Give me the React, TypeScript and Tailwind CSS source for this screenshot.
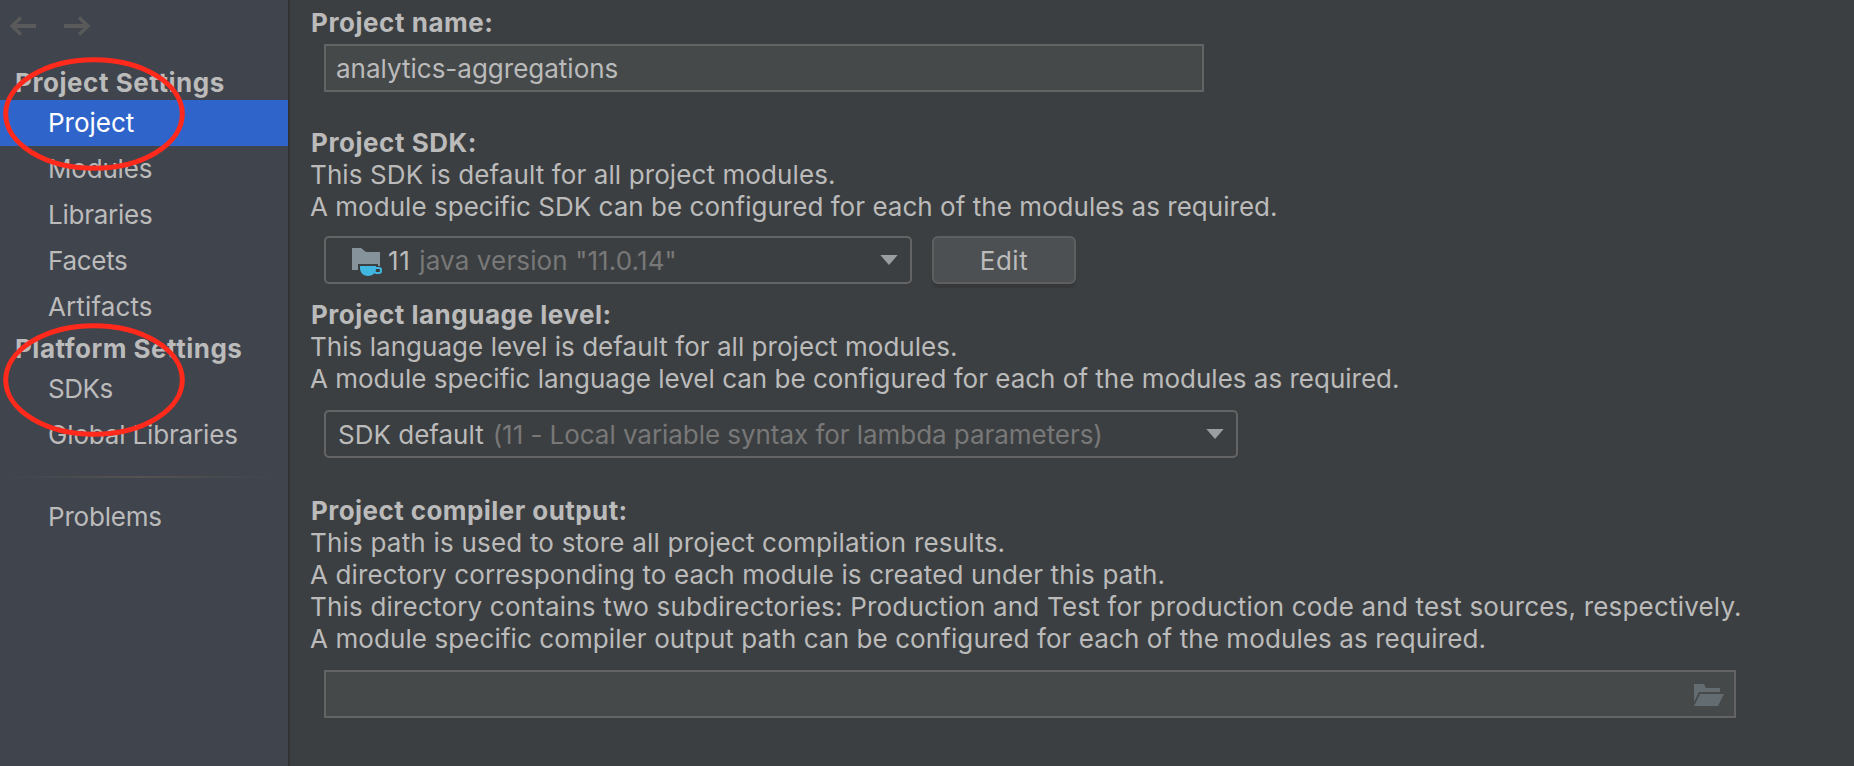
import React from 'react';
import type { ReactNode } from 'react';

function NavHeader({ children, className }: { children: ReactNode; className: string }) {
  return <div className={`flex h-9 items-center pt-0.5 pl-[15px] font-bold whitespace-nowrap ${className}`}>{children}</div>;
}

function NavItem({ label, active = false, className = '' }: { label: string; active?: boolean; className?: string }) {
  return (
    <div className={`flex h-[46px] items-center pl-12 whitespace-nowrap ${active ? 'bg-[#2f65ca] text-white' : ''} ${className}`}>
      {label}
    </div>
  );
}

function SectionTitle({ children, className }: { children: ReactNode; className: string }) {
  return <h2 className={`pl-px font-bold ${className}`}>{children}</h2>;
}

function Caret() {
  return (
    <svg className="-mt-0.5 ml-auto" width="18" height="10" viewBox="0 0 18 10">
      <path d="M0.3 0H17.7L9 10Z" fill="#9b9ea1" />
    </svg>
  );
}

function JdkIcon() {
  return (
    <svg width="30" height="28" viewBox="0 0 30 28">
      <path d="M0 0H9L14 4H28V18H26V16H6V22H0Z" fill="#87939a" />
      <path d="M8 18H24V20C24 25 20.5 28 16 28C11.500 28 8 25 8 20Z" fill="#40b6e0" />
      <rect x="22.500" y="20" width="6.500" height="5" rx="2" fill="none" stroke="#40b6e0" strokeWidth="2" />
    </svg>
  );
}

function OpenFolderIcon() {
  return (
    <svg width="30" height="22" viewBox="0 0 30 22" fill="#636c70">
      <path d="M0 0H10L12 4H26V8H5L0 18Z" />
      <path d="M6 10H30L24 22H0Z" />
    </svg>
  );
}

function Ring({ className }: { className: string }) {
  return (
    <svg className={`pointer-events-none absolute left-[3px] ${className}`} width="182" height="114" viewBox="0 0 182 114">
      <ellipse cx="91" cy="57" rx="88.300" ry="54.300" fill="none" stroke="#ff2a1c" strokeWidth="5" />
    </svg>
  );
}

export default function App() {
  return (
    <div className="relative flex h-[766px] w-[1854px] overflow-hidden bg-[#3c3f41] font-['Inter',sans-serif] text-[26px] leading-8 text-[#bbbbbb]">
      <aside className="w-[290px] shrink-0 border-r-2 border-[#323232] bg-[#40444d]">
        <div className="flex h-16 items-start gap-7 pt-4 pl-2.5">
          <svg width="26" height="20" viewBox="0 0 26 20" fill="none" stroke="#5a5a5a">
            <path d="M3 10H26" strokeWidth="4" />
            <path d="M11 1.500L2 10L11 18.500" strokeWidth="3.300" />
          </svg>
          <svg width="26" height="20" viewBox="0 0 26 20" fill="none" stroke="#5a5a5a">
            <path d="M0 10H23" strokeWidth="4" />
            <path d="M15 1.500L24 10L15 18.500" strokeWidth="3.300" />
          </svg>
        </div>
        <NavHeader className="tracking-[0.55px]">Project Settings</NavHeader>
        <NavItem label="Project" active />
        <NavItem label="Modules" className="tracking-[-0.2px]" />
        <NavItem label="Libraries" className="tracking-[-0.25px]" />
        <NavItem label="Facets" className="tracking-[-0.3px]" />
        <NavItem label="Artifacts" className="tracking-[0.12px]" />
        <NavHeader className="tracking-[0.5px]">Platform Settings</NavHeader>
        <NavItem label="SDKs" className="tracking-[-0.5px]" />
        <NavItem label="Global Libraries" className="tracking-[-0.16px]" />
        <div className="mt-[18px] ml-2 h-0.5 w-[264px] bg-linear-to-r from-transparent via-[#555351] to-transparent" />
        <NavItem label="Problems" className="mt-4 tracking-[-0.2px]" />
      </aside>

      <main className="flex flex-1 flex-col items-start pt-[7px] pl-5 whitespace-nowrap">
        <SectionTitle className="tracking-[0.55px]">Project name:</SectionTitle>
        <div className="mt-[5px] ml-3.5 flex h-12 w-[880px] items-center border-2 border-[#646464] bg-[#45494a] pt-0.5 pl-2.5">
          analytics-aggregations
        </div>

        <SectionTitle className="mt-[35px] tracking-[0.55px]">Project SDK:</SectionTitle>
        <p className="tracking-[0.1px]">This SDK is default for all project modules.</p>
        <p className="tracking-[0.03px]">A module specific SDK can be configured for each of the modules as required.</p>
        <div className="mt-[13px] ml-3.5 flex gap-5">
          <div className="flex h-12 w-[588px] items-center rounded-[5px] border-2 border-[#646464] pt-0.5 pr-3 pl-[26px]">
            <span className="mt-0.5 mr-1.5"><JdkIcon /></span>
            <span className="tracking-[0.6px]">11</span>
            <span className="ml-[9px] tracking-[0.12px] text-[#787878]">java version "11.0.14"</span>
            <Caret />
          </div>
          <button className="h-12 w-36 rounded-md border-2 border-[#5e6060] bg-[#4c5052] pt-0.5 tracking-[0.5px] shadow-[0_4px_1px_#36383a]">Edit</button>
        </div>

        <SectionTitle className="mt-[15px] tracking-[0.52px]">Project language level:</SectionTitle>
        <p className="tracking-[0.04px]">This language level is default for all project modules.</p>
        <p>A module specific language level can be configured for each of the modules as required.</p>
        <div className="mt-[15px] ml-3.5 flex h-12 w-[914px] items-center rounded-[5px] border-2 border-[#646464] pt-0.5 pr-3 pl-3">
          <span>SDK default</span>
          <span className="ml-[9px] tracking-[-0.05px] text-[#787878]">(11 - Local variable syntax for lambda parameters)</span>
          <Caret />
        </div>

        <SectionTitle className="mt-[37px] tracking-[0.43px]">Project compiler output:</SectionTitle>
        <p className="tracking-[0.2px]">This path is used to store all project compilation results.</p>
        <p className="tracking-[0.12px]">A directory corresponding to each module is created under this path.</p>
        <p className="tracking-[0.187px]">This directory contains two subdirectories: Production and Test for production code and test sources, respectively.</p>
        <p className="tracking-[0.09px]">A module specific compiler output path can be configured for each of the modules as required.</p>
        <div className="mt-[15px] ml-3.5 flex h-12 w-[1412px] items-center justify-end border-2 border-[#646464] bg-[#45494a] pt-0.5 pr-2.5">
          <OpenFolderIcon />
        </div>
      </main>

      <Ring className="top-[57px]" />
      <Ring className="top-[323px]" />
    </div>
  );
}
